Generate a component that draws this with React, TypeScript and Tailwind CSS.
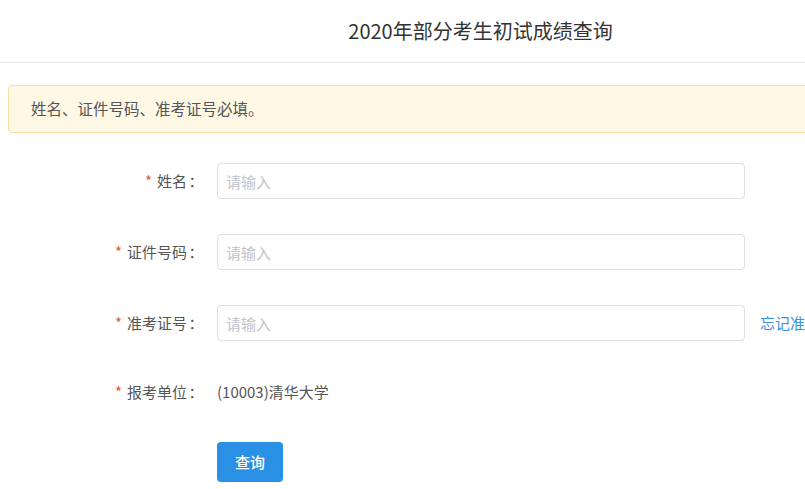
const FIELDS = [
  { label: '姓名', link: false },
  { label: '证件号码', link: false },
  { label: '准考证号', link: true },
];

function Label({ text }: { text: string }) {
  return (
    <div className="flex w-[205px] shrink-0 items-center justify-end text-[15px] text-[#555]">
      <span className="mr-[5px] text-[#e35b3a]">*</span>
      <span>{text}</span>
      <span className="inline-block w-[18px] text-center">：</span>
    </div>
  );
}

export default function App() {
  return (
    <div className="h-screen w-screen overflow-hidden bg-white" style={{ fontFamily: '"Noto Sans CJK SC", "Noto Sans", sans-serif' }}>
      <div className="w-[961px]">
        <header className="flex h-[63px] items-center justify-center border-b border-[#e6e6e6]">
          <h1 className="text-[20px] text-[#333]">2020年部分考生初试成绩查询</h1>
        </header>

        <div className="mx-[8px] mt-[22px] flex h-[48px] items-center rounded-[4px] border border-[#f3dfa6] bg-[#fff8e5] pl-[22px] text-[15.5px] text-[#555]">
          姓名、证件号码、准考证号必填。
        </div>

        <form className="mt-[30px]">
          {FIELDS.map(f => (
            <div key={f.label} className="mb-[35px] flex h-[36px] items-center">
              <Label text={f.label} />
              <input
                placeholder="请输入"
                className="ml-[12px] h-[36px] w-[528px] rounded-[4px] border border-[#dcdfe6] px-[8px] text-[15px] text-[#555] outline-none placeholder:text-[#c0c4cc]"
              />
              {f.link && <a className="ml-[15px] text-[15px] text-[#3a8ee6]">忘记准考证号？</a>}
            </div>
          ))}

          <div className="mt-[-2px] flex h-[36px] items-center">
            <Label text="报考单位" />
            <span className="ml-[12px] text-[15px] text-[#555]">(10003)清华大学</span>
          </div>

          <div className="ml-[217px] mt-[32px]">
            <button type="button" className="h-[40px] w-[66px] rounded-[4px] bg-[#2a90e3] text-[15px] font-medium text-white">
              查询
            </button>
          </div>
        </form>
      </div>
    </div>
  );
}
